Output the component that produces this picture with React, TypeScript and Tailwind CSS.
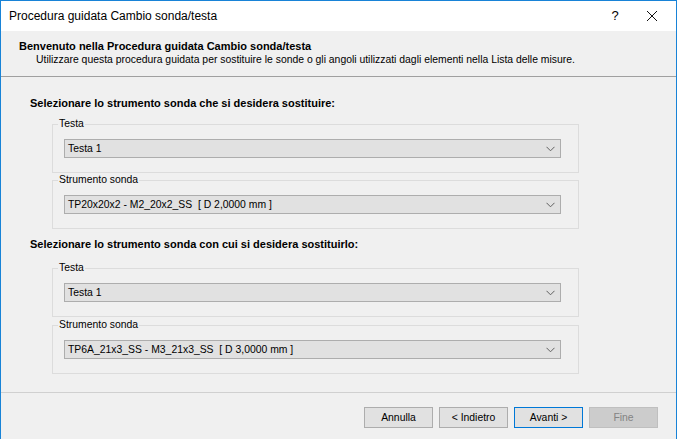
import React from "react";

const Chevron = () => (
  <svg width="9" height="6" viewBox="0 0 9 6" className="shrink-0">
    <path d="M0.5 0.8 L4.5 4.8 L8.5 0.8" fill="none" stroke="#606060" strokeWidth="1" />
  </svg>
);

function Combo({ value }: { value: string }) {
  return (
    <div className="h-[19px] w-[497px] border border-[#adadad] bg-[#e1e1e1] flex items-center pl-[3px] pr-[5px]">
      <span className="flex-1 text-[10.4px] leading-[13px] text-black whitespace-pre">{value}</span>
      <Chevron />
    </div>
  );
}

function Group({ legend, value, className }: { legend: string; value: string; className?: string }) {
  return (
    <div className={"relative ml-[51px] w-[527px] h-[49px] border border-[#dcdcdc] pt-[14px] pl-[11px] " + (className ?? "")}>
      <span className="absolute left-[5px] top-[-8px] bg-[#f0f0f0] px-[1px] text-[10.4px] leading-[13px] text-black">
        {legend}
      </span>
      <Combo value={value} />
    </div>
  );
}

function Btn({ label, variant }: { label: string; variant?: "focus" | "disabled" }) {
  const cls =
    variant === "focus"
      ? "border-[#0078d7] bg-[#e1e1e1] text-black"
      : variant === "disabled"
      ? "border-[#bfbfbf] bg-[#cccccc] text-[#838383]"
      : "border-[#adadad] bg-[#e1e1e1] text-black";
  return (
    <div className={"w-[69px] h-[21px] border flex items-center justify-center text-[10.4px] leading-[13px] " + cls}>
      {label}
    </div>
  );
}

export default function App() {
  return (
    <div
      className="w-[677px] h-[439px] overflow-hidden border-t border-l border-r border-[#1883d7] bg-[#f0f0f0] flex flex-col"
      style={{ fontFamily: '"Liberation Sans", Arial, sans-serif' }}
    >
      {/* Title bar */}
      <div className="h-[30px] bg-white flex items-center shrink-0">
        <span className="pl-[8px] text-[12px] text-black flex-1">Procedura guidata Cambio sonda/testa</span>
        <span className="w-[30px] text-center text-[13px] text-black mr-[16px]">?</span>
        <svg width="12" height="12" viewBox="0 0 12 12" className="mr-[18px]">
          <path d="M1 1 L11 11 M11 1 L1 11" stroke="#111" strokeWidth="1" />
        </svg>
      </div>

      {/* Header */}
      <div className="h-[46px] shrink-0 border-b border-[#a0a0a0] pt-[8px]">
        <div className="pl-[18px] text-[11px] leading-[14px] font-bold text-black">
          Benvenuto nella Procedura guidata Cambio sonda/testa
        </div>
        <div className="pl-[35px] text-[10.4px] leading-[14px] text-black">
          Utilizzare questa procedura guidata per sostituire le sonde o gli angoli utilizzati dagli elementi nella Lista delle misure.
        </div>
      </div>

      {/* Content */}
      <div className="flex-1 flex flex-col pt-[19px]">
        <div className="pl-[29px] text-[11px] leading-[14px] font-bold text-black">
          Selezionare lo strumento sonda che si desidera sostituire:
        </div>
        <Group legend="Testa" value="Testa 1" className="mt-[14px]" />
        <Group legend="Strumento sonda" value="TP20x20x2 - M2_20x2_SS  [ D 2,0000 mm ]" className="mt-[7px]" />
        <div className="pl-[29px] mt-[8px] text-[11px] leading-[14px] font-bold text-black">
          Selezionare lo strumento sonda con cui si desidera sostituirlo:
        </div>
        <Group legend="Testa" value="Testa 1" className="mt-[17px]" />
        <Group legend="Strumento sonda" value="TP6A_21x3_SS - M3_21x3_SS  [ D 3,0000 mm ]" className="mt-[8px]" />
      </div>

      {/* Footer */}
      <div className="h-[47px] shrink-0 border-t border-[#d0d0d0] flex items-start justify-end gap-[6px] pt-[14px] pr-[18px]">
        <Btn label="Annulla" />
        <Btn label="< Indietro" />
        <Btn label="Avanti >" variant="focus" />
        <Btn label="Fine" variant="disabled" />
      </div>
    </div>
  );
}
